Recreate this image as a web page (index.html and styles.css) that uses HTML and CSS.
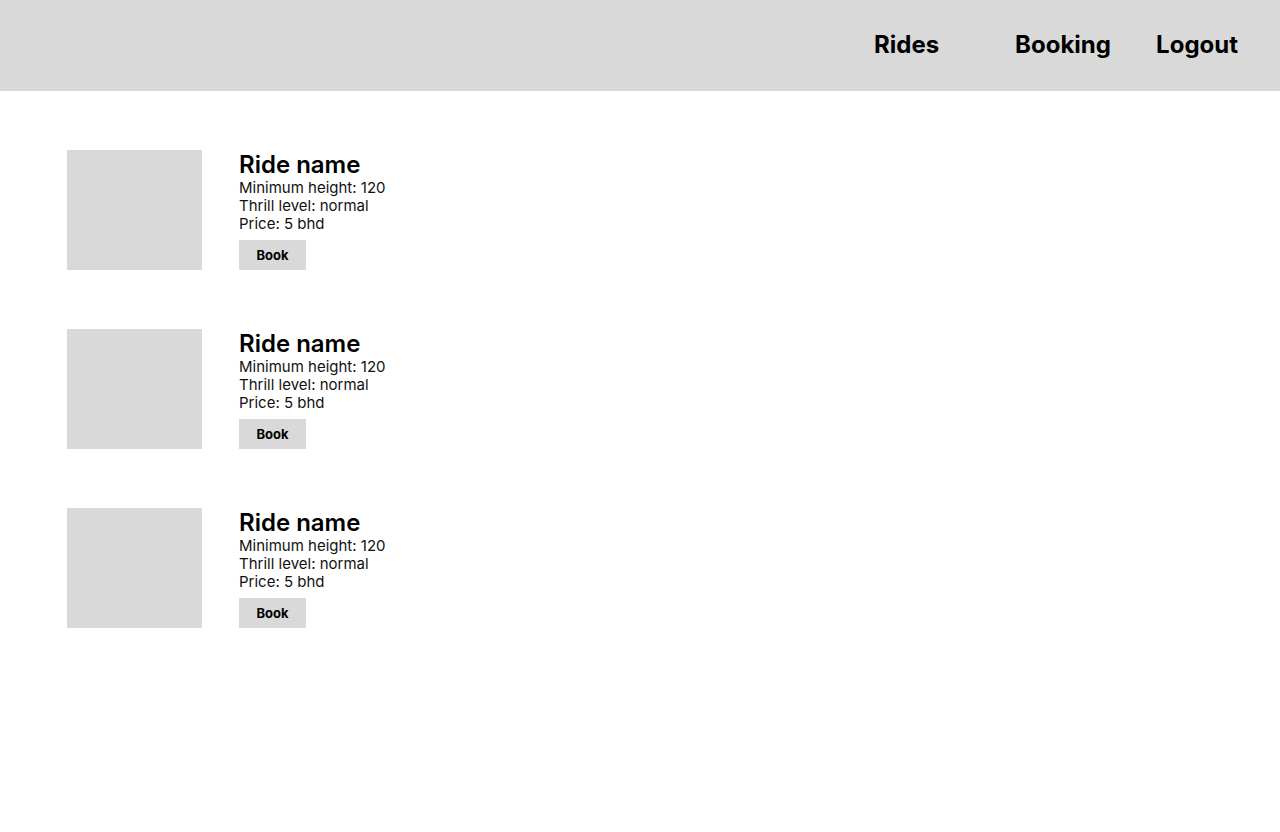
FILE: index.html
```html
<!DOCTYPE html>
<html>
<head>
<meta charset="utf-8">
<link rel="stylesheet" href="styles.css">
</head>
<body>
<header class="topbar">
  <nav class="nav">
    <a class="nav-link" href="#">Rides</a>
    <a class="nav-link" href="#">Booking</a>
    <a class="nav-link nav-last" href="#">Logout</a>
  </nav>
</header>
<main class="rides">
  <div class="ride">
    <div class="ride-img"></div>
    <div class="ride-info">
      <h2 class="ride-title">Ride name</h2>
      <p class="ride-line">Minimum height: 120</p>
      <p class="ride-line">Thrill level: normal</p>
      <p class="ride-line">Price: 5 bhd</p>
      <button class="book-btn">Book</button>
    </div>
  </div>
  <div class="ride">
    <div class="ride-img"></div>
    <div class="ride-info">
      <h2 class="ride-title">Ride name</h2>
      <p class="ride-line">Minimum height: 120</p>
      <p class="ride-line">Thrill level: normal</p>
      <p class="ride-line">Price: 5 bhd</p>
      <button class="book-btn">Book</button>
    </div>
  </div>
  <div class="ride">
    <div class="ride-img"></div>
    <div class="ride-info">
      <h2 class="ride-title">Ride name</h2>
      <p class="ride-line">Minimum height: 120</p>
      <p class="ride-line">Thrill level: normal</p>
      <p class="ride-line">Price: 5 bhd</p>
      <button class="book-btn">Book</button>
    </div>
  </div>
</main>
</body>
</html>
```
FILE: styles.css
```css
* { box-sizing: border-box; }
html, body { margin: 0; padding: 0; }
body {
  font-family: Inter, "Noto Sans", sans-serif;
  color: #000;
  background: #fff;
  width: 1280px;
  height: 832px;
  overflow: hidden;
}
.topbar {
  height: 91px;
  background: #d9d9d9;
  display: flex;
  align-items: center;
  justify-content: flex-end;
}
.nav {
  display: flex;
  align-items: center;
  padding-right: 42px;
  padding-bottom: 3px;
}
.nav-link {
  width: 141px;
  font-size: 24px;
  font-weight: 700;
  color: #000;
  text-decoration: none;
}
.nav-last { width: auto; }
.rides {
  padding: 59px 0 0 67px;
  display: flex;
  flex-direction: column;
  gap: 59px;
}
.ride {
  display: flex;
  gap: 37px;
  height: 120px;
}
.ride-img {
  width: 135px;
  height: 120px;
  background: #d9d9d9;
}
.ride-info {
  display: flex;
  flex-direction: column;
  align-items: flex-start;
}
.ride-title {
  margin: 0;
  font-size: 24px;
  font-weight: 600;
  line-height: 29px;
}
.ride-line {
  margin: 0;
  font-size: 15px;
  line-height: 18px;
  font-weight: 400;
  color: #111;
}
.book-btn {
  margin-top: 7px;
  width: 67px;
  height: 30px;
  border: none;
  background: #d9d9d9;
  font-family: Inter, sans-serif;
  font-size: 13px;
  font-weight: 700;
  color: #000;
  padding: 0;
}
```
